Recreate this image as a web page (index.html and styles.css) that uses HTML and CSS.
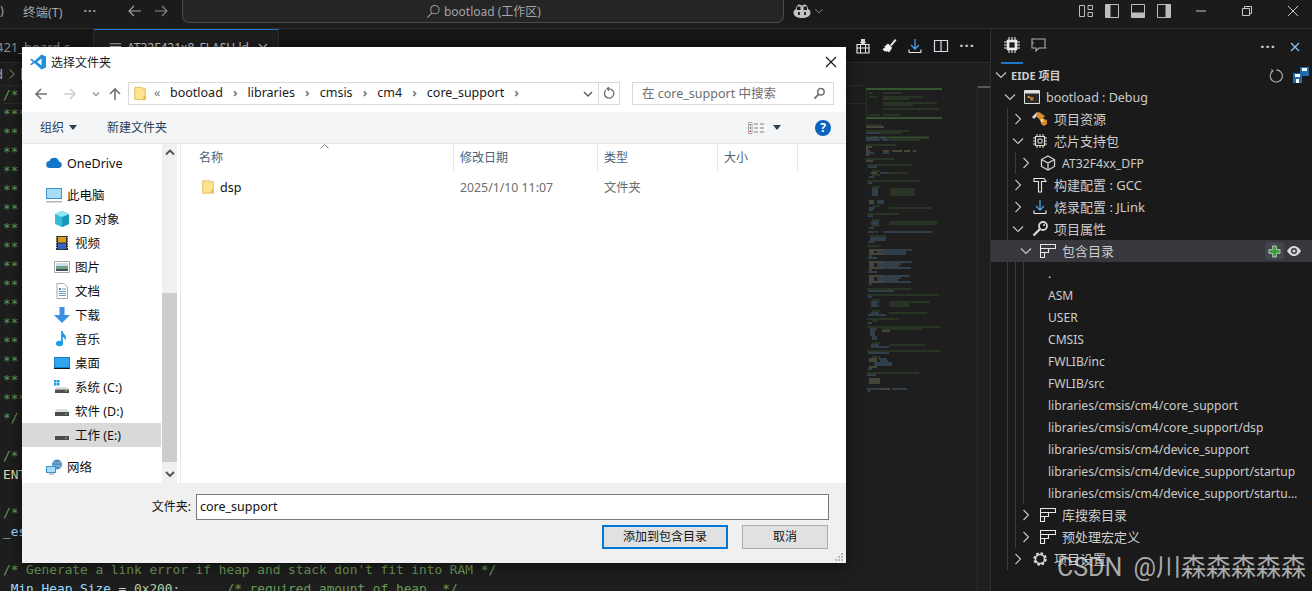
FILE: index.html
```html
<!DOCTYPE html>
<html lang="zh">
<head>
<meta charset="utf-8">
<title>bootload</title>
<link rel="stylesheet" href="styles.css">
</head>
<body>
<svg class="defs" aria-hidden="true">
  <symbol id="chev-d" viewBox="0 0 16 16"><path d="M3 5.500l5 5 5-5" fill="none" stroke="currentColor" stroke-width="1.100"/></symbol>
  <symbol id="chev-r" viewBox="0 0 16 16"><path d="M5.500 3l5 5-5 5" fill="none" stroke="currentColor" stroke-width="1.100"/></symbol>
  <symbol id="list" viewBox="0 0 16 16"><path d="M.5 1.500h15v4h-7v4h-4v5h-4zM.5 5.500h8M.5 9.500h4" fill="none" stroke="#e8e8e8" stroke-width="1.100"/></symbol>
  <symbol id="folder" viewBox="0 0 16 16"><path d="M2 1h8l1 1h3v13H2z" fill="#ffe490" stroke="#dcb64f"/><path d="M12 11h2v4h-2z" fill="#e8b93f"/></symbol>
  <symbol id="drive" viewBox="0 0 16 16"><path d="M3 6h10l2 3H1z" fill="#dcdcdc"/><path d="M1 9h14v4H1z" fill="#4c4c4c"/><path d="M11 10.500h2v1h-2z" fill="#5fd35f"/></symbol>
</svg>

<div class="app">
  <header class="titlebar">
    <span class="menu cut">)</span>
    <span class="menu">终端(T)</span>
    <span class="menu dots">···</span>
    <svg class="nav-arrow" viewBox="0 0 16 16"><path d="M14 8H2M7 3L2 8l5 5" fill="none" stroke="#a8a8a8" stroke-width="1.100"/></svg>
    <svg class="nav-arrow dim" viewBox="0 0 16 16"><path d="M2 8h12M9 3l5 5-5 5" fill="none" stroke="#8a8a8a" stroke-width="1.100"/></svg>
    <div class="command">
      <svg class="cmd-ic" viewBox="0 0 16 16"><circle cx="9.500" cy="6" r="4.500" fill="none" stroke="#9a9a9a" stroke-width="1.100"/><path d="M6.300 9.500L1.500 14.500" stroke="#9a9a9a" stroke-width="1.200"/></svg>
      <span>bootload (工作区)</span>
    </div>
    <svg class="copilot" viewBox="0 0 18 16"><path d="M3 6c0-3 2-4.500 3.500-4.500S9 2.500 9 3.500c0-1 1-2 2.500-2S15 3 15 6c2 1 2.500 2 2.500 4 0 3-4 5-8.500 5S.5 13 .5 10c0-2 .5-3 2.500-4z" fill="#c4c4c4"/><path d="M4 3.500h3.500V7H4zM10.500 3.500H14V7h-3.500z" fill="#1c1c1c"/><path d="M6 9v3M12 9v3" stroke="#1c1c1c" stroke-width="1.800"/></svg>
    <svg class="copilot-chev"><use href="#chev-d"/></svg>
    <div class="win-layout">
      <svg viewBox="0 0 16 16"><path d="M1.500 2.500h5v11h-5zM10 2.500h4.500v4H10zM10 9.500h4.500v4H10z" fill="none" stroke="#bdbdbd"/></svg>
      <svg viewBox="0 0 16 16"><path d="M1.500 1.500h13v13h-13z" fill="none" stroke="#bdbdbd"/><path d="M1.500 1.500h5v13h-5z" fill="#bdbdbd"/></svg>
      <svg viewBox="0 0 16 16"><path d="M1.500 1.500h13v13h-13z" fill="none" stroke="#bdbdbd"/><path d="M1.500 9.500h13v5h-13z" fill="#bdbdbd"/></svg>
      <svg viewBox="0 0 16 16"><path d="M1.500 1.500h13v13h-13z" fill="none" stroke="#bdbdbd"/><path d="M9.500 1.500h5v13h-5z" fill="#bdbdbd"/></svg>
    </div>
    <div class="win-ctrl">
      <svg viewBox="0 0 12 12"><path d="M1 6h10" stroke="#c8c8c8"/></svg>
      <svg viewBox="0 0 12 12"><path d="M1.500 3.500h7v7h-7zM3.500 3.500v-2h7v7h-2" fill="none" stroke="#c8c8c8"/></svg>
      <svg viewBox="0 0 12 12"><path d="M1 1l10 10M11 1L1 11" stroke="#c8c8c8"/></svg>
    </div>
  </header>

  <div class="workbench">
    <main class="editor-col">
      <div class="tabs">
        <div class="tab">421_board.c</div>
        <div class="tab active">
          <svg class="tab-ic" viewBox="0 0 16 16"><path d="M2 4h12M2 7h12M2 10h8" stroke="#c0c0c0" stroke-width="1.200"/></svg>
          <span>AT32F421x8_FLASH.ld</span>
          <svg class="tab-x" viewBox="0 0 12 12"><path d="M2 2l8 8M10 2l-8 8" stroke="#c8c8c8" stroke-width="1.100"/></svg>
        </div>
        <div class="tab-actions">
          <svg viewBox="0 0 16 16"><path d="M2 6.500h12V15H2z" fill="none" stroke="#e8e8e8" stroke-width="1.200"/><path d="M2 10h12M5.500 7v8M10.500 7v8" stroke="#e8e8e8"/><path d="M6 1h4v3h1.500L8 7 4.500 4H6z" fill="#d8d8d8"/></svg>
          <svg viewBox="0 0 16 16"><path d="M9 7l5-6 1.500 1.200-5 6z" fill="#e8e8e8"/><path d="M7 5.500l4 4-.5 1.500L8 14.500l-1.500-1.500-1 1-1-1-1 .5-2-2.500 3-1.500L3 9z" fill="#f0f0f0"/></svg>
          <svg viewBox="0 0 16 16"><path d="M8 1v10M4 7l4 4 4-4" fill="none" stroke="#4b9fe8" stroke-width="1.300"/><path d="M2 14.500h12M2 11.500v3M14 11.500v3" stroke="#e8e8e8" stroke-width="1.200"/></svg>
          <svg viewBox="0 0 16 16"><path d="M1.500 2.500h13v11h-13zM8 2.500v11" fill="none" stroke="#d8d8e8" stroke-width="1.200"/></svg>
          <span class="more">···</span>
        </div>
      </div>
      <div class="crumbs"><span>d</span><svg class="crumb-chev"><use href="#chev-r"/></svg><i class="crumb-ic"></i></div>
      <div class="editor">
        <div class="code">
          <div class="ln c cur">/*</div>
          <div class="ln c">*****************************************************************************</div>
          <div class="ln c">**</div><div class="ln c">**</div><div class="ln c">**</div><div class="ln c">**</div>
          <div class="ln c">**</div><div class="ln c">**</div><div class="ln c">**</div><div class="ln c">**</div>
          <div class="ln c">**</div><div class="ln c">**</div><div class="ln c">**</div><div class="ln c">**</div>
          <div class="ln c">**</div><div class="ln c">**</div>
          <div class="ln c">*****************************************************************************</div>
          <div class="ln c">*/</div>
          <div class="ln">&nbsp;</div>
          <div class="ln c">/* Entry Point */</div>
          <div class="ln"><span class="f">ENTRY</span>(Reset_Handler)</div>
          <div class="ln">&nbsp;</div>
          <div class="ln c">/* Highest address of the user mode stack */</div>
          <div class="ln"><span class="v">_estack</span> = ORIGIN(RAM) + LENGTH(RAM);</div>
          <div class="ln">&nbsp;</div>
          <div class="ln c">/* Generate a link error if heap and stack don't fit into RAM */</div>
          <div class="ln"><span class="v">_Min_Heap_Size</span> = <span class="n">0x200</span>;      <span class="c">/* required amount of heap  */</span></div>
        </div>
        <div class="minimap">
          <svg viewBox="0 0 110 310" width="110" height="310">
            <path fill="none" stroke="#3f6b38" stroke-width="1.800" d="M0 3h76M0 32h76"/>
            <path fill="none" stroke="#36552f" stroke-width="1" d="M0 3v33"/>
            <path fill="none" stroke="#3d6135" stroke-width="1.200" d="M3 7h4M17 7h19M3 11h8M17 11h40M17 13h26M17 17h54M17 19h30M17 23h56M3 29h11M17 29h17M0 39h16M0 45h43M14 47h22M0 51h63M23 52h40M24 54h30M0 59h30M0 73h28M1 79h45M6 85h8M23 87h19M6 89h8M1 95h53M6 101h8M24 103h25M24 105h25M24 107h25M24 109h25M6 120h8M23 122h43M1 128h32M6 134h8M23 136h48M23 138h48M6 140h8M4 150h16M1 160h14M1 203h44M1 209h72M6 214h8M23 216h41M23 218h20M23 220h20M6 225h8M23 227h38M1 233h32M6 235h6M1 241h73M16 243h40M6 257h8M23 259h36M1 265h73M6 271h8M1 287h52"/>
            <path fill="none" stroke="#557c98" stroke-width="1.200" d="M0 47h14M0 52h13M14 52h7M0 54h14M16 54h7M0 67h8M17 67h6M2 81h9M14 87h9M3 91h5M2 97h4M6 103h6M6 105h6M6 107h6M6 109h6M11 115h7M11 117h7M3 122h6M3 124h4M2 130h5M5 136h8M5 138h8M3 142h5M2 146h6M9 146h3M17 146h49M4 152h16M4 154h16M2 156h6M18 164h28M11 166h29M18 168h22M3 170h3M2 172h9M18 176h28M11 178h24M11 180h22M18 182h27M3 184h3M2 186h9M18 190h26M11 192h24M11 194h21M18 196h27M3 198h3M2 205h26M2 211h4M5 216h8M5 218h6M5 220h8M5 227h8M2 229h18M2 237h4M4 243h7M4 245h5M4 247h5M4 249h5M6 251h5M6 253h5M5 259h8M5 261h18M2 267h21M13 273h8M14 275h8M8 277h18M8 279h18M2 283h4M1 289h9M1 303h15M26 303h15"/>
            <path fill="none" stroke="#8a8a6a" stroke-width="1.200" d="M0 41h18M0 61h6M0 65h4M17 65h6M26 65h10M38 65h6M47 65h3M0 75h7M5 87h6M3 115h5M3 117h5M3 164h15M3 168h15M3 176h15M3 182h15M3 190h15M3 196h15M3 273h8M3 275h8M3 281h8M3 293h11M3 295h11M3 297h11"/>
            <path fill="none" stroke="#8c8c8c" stroke-width="1.200" d="M0 63h2M0 69h3M3 166h5M3 178h5M3 180h5M3 192h5M3 194h5M16 245h8M16 303h8M2 305h2"/>
          </svg>
        </div>
        <div class="vscroll"><i></i></div>
      </div>
    </main>

    <aside class="side">
      <div class="side-tabs">
        <div class="side-tab on">
          <svg viewBox="0 0 16 16"><path d="M4 4h8v8H4z" fill="none" stroke="#e8e8e8" stroke-width="2.500"/><path d="M5 0v16M8 0v16M11 0v16M0 5h16M0 8h16M0 11h16" stroke="#e8e8e8" stroke-width="1.100"/><path d="M5.500 5.500h5v5h-5z" fill="#1a1a1a"/></svg>
        </div>
        <div class="side-tab">
          <svg viewBox="0 0 16 16"><path d="M1 2h13v9H8l-3 3v-3H1z M3 6H.5M14 11h1.500" fill="none" stroke="#a8b0b8" stroke-width="1.100"/></svg>
        </div>
        <span class="side-spacer"></span>
        <span class="more">···</span>
        <svg class="side-x" viewBox="0 0 12 12"><path d="M2 2l8 8M10 2l-8 8" stroke="#8fc0e8" stroke-width="1.200"/></svg>
      </div>
      <div class="side-head">
        <svg class="chev"><use href="#chev-d"/></svg>
        <b>EIDE 项目</b>
        <span class="side-spacer"></span>
        <svg class="head-ic" viewBox="0 0 16 16"><path d="M4 3.200a6.500 6.500 0 1 0 4-1.200" fill="none" stroke="#b8b8b8" stroke-width="1.100"/><path d="M2.500 1l2 2.200-2.500 1" fill="none" stroke="#b8b8b8"/></svg>
        <svg class="head-ic save" viewBox="0 0 16 16"><path d="M7 0h9v9H7z" fill="#1e6bb0"/><path d="M9 1h5v3H9z" fill="#fff"/><path d="M0 6h9v10H0z" fill="#1e6bb0"/><path d="M2 7h5v3H2zM3 12h3v4H3z" fill="#fff"/></svg>
      </div>
      <div class="tree">
        <div class="row d0"><svg class="chev"><use href="#chev-d"/></svg>
          <svg class="ic" viewBox="0 0 16 16"><path d="M.5 1.500h15v13H.5z" fill="#2a2a2a" stroke="#e0e0e0"/><path d="M1 1.500h14v3H1z" fill="#e0e0e0"/><path d="M3 8l2-1.500 2 2h3v1H8.500l1 2H7l-1-2.500H4z" fill="#d98a2b"/></svg>
          <span class="t">bootload : Debug</span></div>
        <div class="row"><i class="g"></i><i class="s"></i><svg class="chev"><use href="#chev-r"/></svg>
          <svg class="ic" viewBox="0 0 16 16"><path d="M0 6l5-5 2 2-5 5z" fill="#d8d8d8"/><path d="M4 3l3-2 6 4-2 2 1 1 3 1v4l-3 2-3-2v-3L7 8 5 6z" fill="#d98a2b"/><path d="M8.500 8h3v3h-3z" fill="#f0d090"/></svg>
          <span class="t zh">项目资源</span></div>
        <div class="row"><i class="g"></i><i class="s"></i><svg class="chev"><use href="#chev-d"/></svg>
          <svg class="ic" viewBox="0 0 16 16"><path d="M3.500 3.500h9v9h-9z" fill="none" stroke="#e0e0e0" stroke-width="1.200"/><path d="M6 6h4v4H6zM5 1v2M8 1v2M11 1v2M5 13v2M8 13v2M11 13v2M1 5h2M1 8h2M1 11h2M13 5h2M13 8h2M13 11h2" fill="none" stroke="#e0e0e0"/></svg>
          <span class="t zh">芯片支持包</span></div>
        <div class="row"><i class="g"></i><i class="g"></i><i class="s"></i><svg class="chev"><use href="#chev-r"/></svg>
          <svg class="ic" viewBox="0 0 16 16"><path d="M8 1l6.500 3.500v7L8 15l-6.500-3.500v-7zM1.500 4.500L8 8l6.500-3.500M8 8v7" fill="none" stroke="#dcdcdc" stroke-width="1.200"/></svg>
          <span class="t lat">AT32F4xx_DFP</span></div>
        <div class="row"><i class="g"></i><i class="s"></i><svg class="chev"><use href="#chev-r"/></svg>
          <svg class="ic" viewBox="0 0 16 16"><path d="M2 1.500h10l2 3H9.500V15h-3V4.500H2z" fill="none" stroke="#e8e8e8" stroke-width="1.100"/></svg>
          <span class="t zh">构建配置 : GCC</span></div>
        <div class="row"><i class="g"></i><i class="s"></i><svg class="chev"><use href="#chev-r"/></svg>
          <svg class="ic" viewBox="0 0 16 16"><path d="M8 1v10M4 7l4 4 4-4" fill="none" stroke="#4b9fe8" stroke-width="1.300"/><path d="M2 14.500h12M2 11.500v3M14 11.500v3" stroke="#e8e8e8" stroke-width="1.200"/></svg>
          <span class="t zh">烧录配置 : JLink</span></div>
        <div class="row"><i class="g"></i><i class="s"></i><svg class="chev"><use href="#chev-d"/></svg>
          <svg class="ic" viewBox="0 0 16 16"><circle cx="11" cy="5" r="4" fill="none" stroke="#d8d8d8" stroke-width="1.800"/><path d="M8 8L1.500 14.500" stroke="#d8d8d8" stroke-width="2.400"/><circle cx="12" cy="4" r="1" fill="#d8d8d8"/></svg>
          <span class="t zh">项目属性</span></div>
        <div class="row sel"><i class="g"></i><i class="g"></i><i class="s"></i><svg class="chev"><use href="#chev-d"/></svg>
          <svg class="ic"><use href="#list"/></svg>
          <span class="t zh">包含目录</span>
          <span class="actions">
            <span class="add"><svg viewBox="0 0 14 14"><path d="M5 1h4v4h4v4H9v4H5V9H1V5h4z" fill="#3f9a3f" stroke="#d0e8d0" stroke-width=".8"/></svg></span>
            <svg class="eye" viewBox="0 0 16 16"><path d="M1 8c2-3.500 4.500-5 7-5s5 1.500 7 5c-2 3.500-4.500 5-7 5s-5-1.500-7-5z" fill="#d8d8d8"/><circle cx="8" cy="8" r="3" fill="#37373d"/><circle cx="8" cy="8" r="1.500" fill="#d8d8d8"/></svg>
          </span></div>
        <div class="row leaf"><i class="g"></i><i class="g"></i><i class="g"></i><span class="t">.</span></div>
        <div class="row leaf"><i class="g"></i><i class="g"></i><i class="g"></i><span class="t">ASM</span></div>
        <div class="row leaf"><i class="g"></i><i class="g"></i><i class="g"></i><span class="t">USER</span></div>
        <div class="row leaf"><i class="g"></i><i class="g"></i><i class="g"></i><span class="t">CMSIS</span></div>
        <div class="row leaf"><i class="g"></i><i class="g"></i><i class="g"></i><span class="t">FWLIB/inc</span></div>
        <div class="row leaf"><i class="g"></i><i class="g"></i><i class="g"></i><span class="t">FWLIB/src</span></div>
        <div class="row leaf"><i class="g"></i><i class="g"></i><i class="g"></i><span class="t">libraries/cmsis/cm4/core_support</span></div>
        <div class="row leaf"><i class="g"></i><i class="g"></i><i class="g"></i><span class="t">libraries/cmsis/cm4/core_support/dsp</span></div>
        <div class="row leaf"><i class="g"></i><i class="g"></i><i class="g"></i><span class="t">libraries/cmsis/cm4/device_support</span></div>
        <div class="row leaf"><i class="g"></i><i class="g"></i><i class="g"></i><span class="t">libraries/cmsis/cm4/device_support/startup</span></div>
        <div class="row leaf"><i class="g"></i><i class="g"></i><i class="g"></i><span class="t">libraries/cmsis/cm4/device_support/startup/gcc</span></div>
        <div class="row"><i class="g"></i><i class="g"></i><i class="s"></i><svg class="chev"><use href="#chev-r"/></svg>
          <svg class="ic"><use href="#list"/></svg><span class="t zh">库搜索目录</span></div>
        <div class="row"><i class="g"></i><i class="g"></i><i class="s"></i><svg class="chev"><use href="#chev-r"/></svg>
          <svg class="ic"><use href="#list"/></svg><span class="t zh">预处理宏定义</span></div>
        <div class="row"><i class="g"></i><i class="s"></i><svg class="chev"><use href="#chev-r"/></svg>
          <svg class="ic" viewBox="0 0 16 16"><circle cx="8" cy="8" r="5.500" fill="none" stroke="#d8d8d8" stroke-width="2.500" stroke-dasharray="2.500 1.800"/><circle cx="8" cy="8" r="4.500" fill="none" stroke="#d8d8d8" stroke-width="1.500"/></svg>
          <span class="t zh">项目设置</span></div>
      </div>
    </aside>
  </div>

  <section class="dialog">
    <div class="dlg-title">
      <svg class="vs" viewBox="0 0 16 16"><path d="M11.500.5L16 2.500v11l-4.500 2-7-6.500-3 2.300L0 10.500 3 8 0 5.500l1.500-.8 3 2.300zM11.500 4.500L7 8l4.500 3.500z" fill="#1f8fe0"/></svg>
      <span>选择文件夹</span>
      <svg class="dlg-x" viewBox="0 0 12 12"><path d="M1 1l10 10M11 1L1 11" stroke="#111" stroke-width="1.100"/></svg>
    </div>
    <div class="dlg-nav">
      <svg class="back" viewBox="0 0 14 14"><path d="M13 7H2M7 2L2 7l5 5" fill="none" stroke="#707070" stroke-width="1.600"/></svg>
      <svg class="fwd" viewBox="0 0 14 14"><path d="M1 7h11M7 2l5 5-5 5" fill="none" stroke="#cfcfcf" stroke-width="1.600"/></svg>
      <svg class="hist" viewBox="0 0 8 8"><path d="M1 2.500l3 3 3-3" fill="none" stroke="#9a9a9a" stroke-width="1.400"/></svg>
      <svg class="up" viewBox="0 0 14 14"><path d="M7 13V2M2 7l5-5 5 5" fill="none" stroke="#707070" stroke-width="1.600"/></svg>
      <div class="address">
        <svg class="addr-folder"><use href="#folder"/></svg>
        <span class="lq">«</span>
        <span class="bc">bootload</span><span class="sep">›</span>
        <span class="bc">libraries</span><span class="sep">›</span>
        <span class="bc">cmsis</span><span class="sep">›</span>
        <span class="bc">cm4</span><span class="sep">›</span>
        <span class="bc">core_support</span><span class="sep">›</span>
        <span class="side-spacer"></span>
        <svg class="addr-drop" viewBox="0 0 10 10"><path d="M1 3l4 4 4-4" fill="none" stroke="#606060" stroke-width="1.500"/></svg>
        <span class="addr-refresh"><svg viewBox="0 0 14 14"><path d="M3 3.500a5 5 0 1 0 4-1.500H4.500M6.500 0L4.500 2l2 2" fill="none" stroke="#707070" stroke-width="1.500"/></svg></span>
      </div>
      <div class="search">
        <span class="zhb">在 core_support 中搜索</span>
        <svg viewBox="0 0 14 14"><circle cx="8.500" cy="5" r="3.500" fill="none" stroke="#707070" stroke-width="1.600"/><path d="M6 8l-4.500 4.500" stroke="#707070" stroke-width="2"/></svg>
      </div>
    </div>
    <div class="dlg-tools">
      <span class="tool zhb">组织</span><i class="caret"></i>
      <span class="tool new zhb">新建文件夹</span>
      <span class="side-spacer"></span>
      <svg class="view" viewBox="0 0 16 12"><path d="M.5.500h3.500v11H.5z" fill="#fff" stroke="#a8a8a8"/><path d="M1.500 2h1.500v1.500H1.500zM1.500 5.200h1.500v1.500H1.500z" fill="#606060"/><path d="M1.500 8.500h1.500V10H1.500z" fill="#c03030"/><path d="M6 2h4M6 6h4M6 10h4M12 2h4M12 6h4M12 10h4" stroke="#808080"/></svg>
      <i class="caret view-caret"></i>
      <span class="help">?</span>
    </div>
    <div class="dlg-main">
      <nav class="navpane">
        <div class="navlist">
          <div class="nitem top"><svg viewBox="0 0 16 16"><path d="M4 13a3.500 3.500 0 0 1-.5-7A5 5 0 0 1 13 6.500a3.300 3.300 0 0 1 0 6.500z" fill="#1277cc"/></svg><span>OneDrive</span></div>
          <div class="nitem top gap"><svg viewBox="0 0 16 16"><path d="M0 1h16v11H0z" fill="#3d8fc8"/><path d="M1 2h14v9H1z" fill="#a5dcf8"/><path d="M0 14h16v1.500H0z" fill="#b0b8c0"/></svg><span class="zhb">此电脑</span></div>
          <div class="nitem"><svg viewBox="0 0 16 16"><path d="M8 0l7 3v10l-7 3-7-3V3z" fill="#35bcd4"/><path d="M8 6l7-3v10l-7 3z" fill="#1a96b8"/><path d="M8 6L1 3l7-3 7 3z" fill="#8ee6f0"/></svg><span class="zhb">3D 对象</span></div>
          <div class="nitem"><svg viewBox="0 0 16 16"><path d="M2 1h12v14H2z" fill="#333"/><path d="M4 2h8v5.500H4z" fill="#d8a020"/><path d="M4 8.500h8V14H4z" fill="#3a60c8"/><path d="M2.500 2v12M13.500 2v12" stroke="#ddd" stroke-dasharray="1 1.500"/></svg><span class="zhb">视频</span></div>
          <div class="nitem"><svg viewBox="0 0 16 16"><path d="M.5 2.500h15v11H.5z" fill="#fff" stroke="#a8a8a8"/><path d="M2 4h12v3H2z" fill="#c8e0f0"/><path d="M2 7h12v3H2z" fill="#70a080"/><path d="M2 10h12v2H2z" fill="#405060"/></svg><span class="zhb">图片</span></div>
          <div class="nitem"><svg viewBox="0 0 16 16"><path d="M3 .5h7l3.500 3.500v11.500H3z" fill="#fff" stroke="#a8a8a8"/><path d="M5 5h2v2H5z" fill="#3a90d0"/><path d="M8 6h4M5 8.500h7M5 10.500h7M5 12.500h7" stroke="#7898b8"/></svg><span class="zhb">文档</span></div>
          <div class="nitem"><svg viewBox="0 0 16 16"><path d="M5.500 0h5v8H16l-8 8-8-8h5.500z" fill="#3a8fe0"/></svg><span class="zhb">下载</span></div>
          <div class="nitem"><svg viewBox="0 0 16 16"><path d="M8 0v12" stroke="#1a9ae8" stroke-width="1.800"/><ellipse cx="5.500" cy="12.500" rx="3.500" ry="2.800" fill="#1a9ae8"/><path d="M8 0c1 3 4 3 4 7 0 1-.5 2-1 2.500 0-2-1-3.500-3-4z" fill="#1a9ae8"/></svg><span class="zhb">音乐</span></div>
          <div class="nitem"><svg viewBox="0 0 16 16"><path d="M0 2h16v12H0z" fill="#1a7ac0"/><path d="M1 3h14v9H1z" fill="#2ea6f0"/><path d="M0 13h16v1H0z" fill="#101828"/></svg><span class="zhb">桌面</span></div>
          <div class="nitem"><svg viewBox="0 0 16 16"><path d="M0 1h2.500v2.500H0zM3 1h2.500v2.500H3zM0 4h2.500v2.500H0zM3 4h2.500v2.500H3z" fill="#1aa0e8"/><path d="M3 8h10l2 2.500H1z" fill="#dcdcdc"/><path d="M1 10.500h14V14H1z" fill="#505050"/><path d="M11 11.500h2v1h-2z" fill="#5fd35f"/></svg><span class="zhb">系统 (C:)</span></div>
          <div class="nitem"><svg><use href="#drive"/></svg><span class="zhb">软件 (D:)</span></div>
          <div class="nitem picked"><svg><use href="#drive"/></svg><span class="zhb">工作 (E:)</span></div>
          <div class="nitem top gap"><svg viewBox="0 0 16 16"><circle cx="11" cy="5.500" r="5" fill="#4a90c8"/><path d="M7 3c2 1 6 1 8 0M6.500 7h9" stroke="#b8d8f0" stroke-width=".8"/><path d="M0 7h10v7H0z" fill="#3d8fc8"/><path d="M1 8h8v5H1z" fill="#a5dcf8"/><path d="M3 15h5" stroke="#888"/></svg><span class="zhb">网络</span></div>
        </div>
        <div class="nscroll">
          <svg class="na" viewBox="0 0 10 8"><path d="M1 5.500l4-4 4 4" fill="none" stroke="#505050" stroke-width="1.800"/></svg>
          <div class="ntrack"><i></i></div>
          <svg class="na" viewBox="0 0 10 8"><path d="M1 2l4 4 4-4" fill="none" stroke="#505050" stroke-width="1.800"/></svg>
        </div>
      </nav>
      <div class="files">
        <svg class="sort" viewBox="0 0 9 5"><path d="M.5 4.500l4-4 4 4" fill="none" stroke="#8a8a8a"/></svg>
        <div class="fhead">
          <span class="col c1"><span class="zhb">名称</span></span><span class="col c2"><span class="zhb">修改日期</span></span><span class="col c3"><span class="zhb">类型</span></span><span class="col c4"><span class="zhb">大小</span></span>
        </div>
        <div class="frow">
          <span class="c1 fname"><svg><use href="#folder"/></svg>dsp</span>
          <span class="c2 meta">2025/1/10 11:07</span>
          <span class="c3 meta">文件夹</span>
        </div>
      </div>
    </div>
    <div class="dlg-foot">
      <div class="fline">
        <label class="zhb">文件夹:</label>
        <div class="finput">core_support</div>
      </div>
      <div class="btns">
        <span class="btn primary">添加到包含目录</span>
        <span class="btn cancel">取消</span>
      </div>
      <svg class="grip" viewBox="0 0 8 8"><path d="M6 0h2v2H6zM3 3h2v2H3zM6 3h2v2H6zM0 6h2v2H0zM3 6h2v2H3zM6 6h2v2H6z" fill="#b8b8b8"/></svg>
    </div>
  </section>

  <div class="watermark">CSDN @川森森森森森</div>
</div>
</body>
</html>
```
FILE: styles.css
```css
* { box-sizing: border-box; }
html, body { margin: 0; height: 100%; background: #1e1e1e; }
body { font-family: "Noto Sans", "Noto Sans CJK SC", sans-serif; font-size: 13px; color: #ccc; overflow: hidden; }
svg { display: block; flex: none; }
.defs { width: 0; height: 0; position: absolute; }
.side-spacer { flex: 1; }
.more { letter-spacing: 1px; color: #ccc; font-size: 15px; font-weight: 700; line-height: 1; }
.zhb { padding-bottom: 2px; }

.app { width: 1312px; height: 591px; display: flex; flex-direction: column; position: relative; overflow: hidden; }

/* title bar */
.titlebar { height: 29px; flex: none; background: #1b1b1b; border-bottom: 1px solid #2f2f2f; display: flex; align-items: flex-start; color: #a4a4a4; }
.titlebar > * { margin-top: 3px; }
.menu { font-size: 12.5px; margin-top: 2px; }
.cut { width: 23px; }
.dots { margin-left: 21px; width: 44px; letter-spacing: 1px; font-weight: 700; }
.nav-arrow { width: 16px; height: 16px; margin-right: 10px; }
.nav-arrow.dim { margin-right: 14px; }
.titlebar .command { width: 602px; height: 23px; margin: 0 0 0 -1px; background: #252525; border: 1px solid #4b4b4b; border-top: 0; border-radius: 0 0 7px 7px; display: flex; align-items: center; justify-content: center; gap: 3px; font-size: 12px; }
.cmd-ic { width: 15px; height: 15px; }
.copilot { width: 18px; height: 16px; margin-left: 9px; }
.copilot-chev { width: 12px; height: 12px; margin-left: 2px; color: #999; }
.titlebar .copilot-chev { margin-top: 5px; }
.win-layout { margin-left: 253px; display: flex; gap: 10px; }
.win-layout svg { width: 16px; height: 16px; }
.win-ctrl { margin-left: 23px; display: flex; gap: 34px; }
.titlebar .win-ctrl { margin-top: 5px; }
.win-ctrl svg { width: 12px; height: 12px; }

.workbench { flex: 1; display: flex; min-height: 0; }
.editor-col { width: 991px; flex: none; display: flex; flex-direction: column; border-right: 1px solid #303030; min-width: 0; }

/* tabs */
.tabs { height: 34px; flex: none; background: #161616; border-bottom: 1px solid #2b2b2b; display: flex; }
.tab { padding: 9px 0 0 0; color: #8c8c8c; font-size: 13px; white-space: nowrap; overflow: hidden; margin-left: -4px; width: 98px; border-right: 1px solid #2b2b2b; }
.tab.active { width: 185px; margin: 0; border-top: 1px solid #1c78c8; background: #1e1e1e; display: flex; align-items: center; padding: 2px 0 0 14px; color: #ccc; height: 34px; font-size: 12px; }
.tab-ic { width: 15px; height: 15px; margin-right: 4px; }
.tab-x { width: 12px; height: 12px; margin-left: 8px; }
.tab-actions { margin-left: auto; display: flex; align-items: center; gap: 10px; padding-right: 15px; }
.tab-actions svg { width: 16px; height: 16px; }

.crumbs { height: 22px; flex: none; display: flex; align-items: center; background: #1e1e1e; color: #a8a8a8; margin-left: -5px; }
.crumb-chev { width: 14px; height: 14px; color: #999; margin-left: 2px; }
.crumb-ic { width: 2px; height: 12px; background: #5a8fb8; margin-left: 2px; }

/* editor */
.editor { flex: 1; min-height: 0; display: flex; background: #1e1e1e; overflow: hidden; }
.code { flex: 1; min-width: 0; padding: 0 0 0 3px; font-family: "DejaVu Sans Mono", monospace; font-size: 12.8px; overflow: hidden; }
.ln { height: 19px; line-height: 19px; white-space: pre; color: #ccc; }
.ln.c, .c { color: #6a9955; }
.f { color: #dcdcaa; }
.v { color: #9cdcfe; }
.n { color: #b5cea8; }
.cur { box-shadow: inset 0 1px 0 #2c2c2c, inset 0 -1px 0 #2c2c2c; }
.minimap { width: 111px; flex: none; padding-top: 1px; }
.minimap svg { opacity: .72; }
.vscroll { width: 13px; flex: none; border-left: 1px solid #2a2a2a; padding-top: 1px; }
.vscroll i { display: block; height: 2px; background: #585858; }

/* sidebar */
.side { flex: 1; min-width: 0; background: #1a1a1a; display: flex; flex-direction: column; }
.side-tabs { height: 35px; flex: none; display: flex; align-items: center; padding: 0 11px 0 10px; }
.side-tab { width: 22px; height: 35px; margin-right: 5px; display: flex; align-items: center; justify-content: center; padding-bottom: 3px; }
.side-tab.on { border-bottom: 2px solid #1c78c8; padding-bottom: 1px; }
.side-tab svg { width: 16px; height: 16px; }
.side-tabs .more { margin-right: 1px; }
.side-x { width: 12px; height: 12px; margin-left: 12px; }
.side-head { height: 22px; flex: none; display: flex; align-items: center; padding: 0 3px 0 2px; }
.side-head b { font-size: 11px; font-weight: 700; margin-left: 2px; }
.chev { width: 16px; height: 16px; color: #c8c8c8; }
.head-ic { width: 15px; height: 15px; margin-right: 9px; }
.head-ic.save { width: 16px; height: 16px; margin: 0; }
.tree { flex: 1; min-height: 0; }
.row { height: 22px; display: flex; align-items: center; padding: 0 16px; white-space: nowrap; }
.row.d0 { padding-left: 11px; }
.row.leaf { padding-right: 12px; }
.g { width: 8px; height: 22px; flex: none; border-left: 1px solid #3c3c3c; }
.s { width: 0; flex: none; margin-left: -5px; }
.ic { width: 16px; height: 16px; margin: 0 6px; }
.t { min-width: 0; overflow: hidden; text-overflow: ellipsis; font-size: 12.5px; color: #ccc; }
.t.zh { font-size: 13px; padding-bottom: 2px; }
.t.lat { font-size: 12.2px; }
.leaf .t { margin-left: 17px; font-size: 12.1px; }
.sel { background: #37373d; padding-right: 10px; }
.actions { margin-left: auto; display: flex; align-items: center; gap: 2px; }
.add { width: 19px; height: 18px; background: #44444c; border-radius: 4px; display: flex; align-items: center; justify-content: center; }
.add svg { width: 13px; height: 13px; }
.eye { width: 16px; height: 16px; }

/* dialog */
.dialog { position: absolute; left: 22px; top: 47px; width: 824px; height: 516px; background: #fff; color: #1a1a1a; display: flex; flex-direction: column; box-shadow: 0 2px 14px rgba(0,0,0,.55); font-size: 12.5px; }
.dlg-title { height: 29px; flex: none; display: flex; align-items: center; padding: 0 9px 0 8px; font-size: 12px; }
.vs { width: 16px; height: 16px; margin-right: 5px; }
.dlg-x { width: 12px; height: 12px; margin-left: auto; }
.dlg-nav { height: 35px; margin-bottom: 1px; flex: none; display: flex; align-items: center; padding: 0 12px 0 0; }
.dlg-nav svg { flex: none; }
.back { width: 14px; height: 14px; margin-left: 12px; }
.fwd { width: 14px; height: 14px; margin-left: 15px; }
.hist { width: 8px; height: 8px; margin-left: 15px; }
.up { width: 14px; height: 14px; margin-left: 8px; }
.address { width: 492px; height: 23px; margin-left: 6px; border: 1px solid #d9d9d9; display: flex; align-items: center; padding-left: 4px; color: #1a1a1a; font-size: 12.5px; }
.bc, .sep, .lq { padding-bottom: 2px; }
.addr-folder { width: 14px; height: 15px; }
.lq { color: #7a7a7a; margin-left: 7px; width: 16px; }
.sep { width: 24.7px; text-align: center; color: #777; font-weight: 700; }
.addr-drop { width: 10px; height: 10px; margin-right: 5px; }
.addr-refresh { width: 21px; height: 21px; border-left: 1px solid #d9d9d9; display: flex; align-items: center; justify-content: center; }
.addr-refresh svg { width: 13px; height: 13px; }
.search { width: 202px; height: 23px; margin-left: 12px; border: 1px solid #d9d9d9; display: flex; align-items: center; justify-content: space-between; padding: 0 7px 0 9px; color: #6d6d6d; }
.search svg { width: 13px; height: 13px; }
.dlg-tools { height: 32px; flex: none; background: #f3f5f7; border-bottom: 1px solid #e6e6e6; display: flex; align-items: center; padding: 0 15px 0 18px; color: #2d3f55; font-size: 12px; }
.caret { width: 0; height: 0; border: 4px solid transparent; border-top: 5px solid #2d3f55; border-bottom: 0; margin-left: 5px; }
.new { margin-left: 30px; }
.tool { white-space: nowrap; }
.view { width: 16px; height: 12px; }
.view-caret { margin-left: 9px; margin-right: 34px; }
.help { width: 16px; height: 16px; border-radius: 50%; background: #0c63bd; color: #fff; font-weight: 700; font-size: 12px; display: flex; align-items: center; justify-content: center; line-height: 1; }

.dlg-main { flex: 1; min-height: 0; display: flex; background: #fff; }
.navpane { width: 155px; flex: none; display: flex; }
.navlist { width: 140px; flex: none; padding-top: 7px; }
.nitem { height: 24px; display: flex; align-items: center; padding-left: 32px; gap: 5px; color: #111; font-size: 12.5px; white-space: nowrap; margin-right: 1px; }
.nitem.top { padding-left: 24px; }
.nitem.gap { margin-top: 8px; }
.nitem svg { width: 16px; height: 16px; }
.picked { background: #d9d9d9; }
.nscroll { width: 15px; flex: none; background: #f0f0f0; display: flex; flex-direction: column; align-items: center; }
.na { width: 10px; height: 8px; margin: 5px 0; }
.ntrack { flex: 1; width: 15px; padding-top: 131px; }
.ntrack i { display: block; height: 169px; background: #cdcdcd; }
.files { flex: 1; min-width: 0; margin-left: 3px; border-left: 1px solid #e8e8e8; position: relative; }
.sort { position: absolute; left: 139px; top: 0; width: 9px; height: 5px; }
.fhead { display: flex; height: 27px; color: #4c607a; font-size: 12px; align-items: center; }
.col { height: 27px; display: flex; align-items: center; border-right: 1px solid #e5e5e5; }
.c1 { width: 273px; padding-left: 18px; flex: none; }
.c2 { width: 144px; padding-left: 6px; flex: none; }
.c3 { width: 120px; padding-left: 6px; flex: none; }
.c4 { width: 80px; padding-left: 6px; flex: none; }
.frow { display: flex; align-items: center; height: 22px; margin-top: 5px; }
.fname { display: flex; align-items: center; gap: 5px; padding-left: 20px; color: #111; }
.fname svg { width: 14px; height: 16px; }
.meta { color: #6d6d6d; font-size: 12.3px; }

.dlg-foot { height: 80px; flex: none; background: #f0f0f0; position: relative; display: flex; flex-direction: column; padding: 11px 17px 0 0; }
.fline { display: flex; align-items: center; justify-content: flex-end; gap: 5px; }
.fline label { color: #111; font-size: 12px; }
.finput { width: 633px; height: 26px; background: #fff; border: 1px solid #7a7a7a; padding: 0 3px 2px; display: flex; align-items: center; color: #111; }
.btns { display: flex; justify-content: flex-end; gap: 14px; margin: 5px 1px 0 0; }
.btn { height: 24px; display: flex; align-items: center; justify-content: center; background: #e1e1e1; color: #111; font-size: 12px; padding-bottom: 2px; }
.primary { width: 126px; border: 2px solid #0078d7; }
.cancel { width: 86px; border: 1px solid #adadad; }
.grip { position: absolute; right: 3px; bottom: 2px; width: 8px; height: 8px; }

.watermark { position: absolute; left: 1057px; top: 550px; font-family: Roboto, "Noto Sans CJK SC", sans-serif; font-size: 25px; line-height: 36px; word-spacing: 5px; color: rgba(220,220,220,.75); white-space: nowrap; }
```
